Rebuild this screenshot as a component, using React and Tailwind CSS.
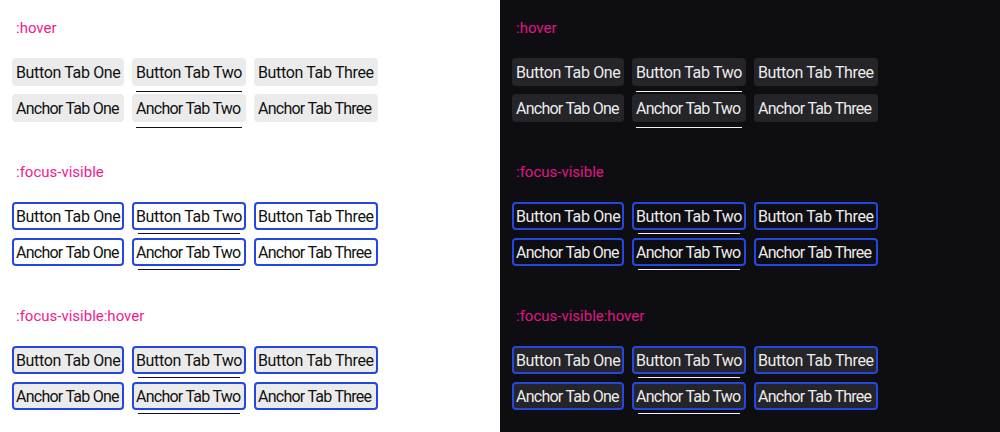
const sections = [
  { label: ":hover", state: "hover" },
  { label: ":focus-visible", state: "focus" },
  { label: ":focus-visible:hover", state: "both" },
];

const rows = [
  ["Button Tab One", "Button Tab Two", "Button Tab Three"],
  ["Anchor Tab One", "Anchor Tab Two", "Anchor Tab Three"],
];

const widths = ["w-[112px]", "w-[114px]", "w-[124px]"];

const Tab = ({ text, state, dark, col, anchor }) => {
  const hover = state === "hover" || state === "both";
  const focus = state === "focus" || state === "both";
  let cls = "relative h-7 rounded whitespace-nowrap overflow-visible " + widths[col] + " ";
  cls += anchor ? "tracking-[-0.75px] " : "tracking-[-0.35px] ";
  if (focus) cls += "border-2 border-[#2447e0] px-[2px] leading-[26px] ";
  else cls += "px-1 leading-[30px] ";
  if (hover) cls += dark ? "bg-[#252428] " : "bg-[#ebebeb] ";
  cls += dark ? "text-[#ececec]" : "text-[#111111]";
  return (
    <div className={cls}>
      <span className="block h-full">{text}</span>
      {col === 1 && (
        <span
          className={
            "absolute left-1 right-1 -bottom-[6px] h-px " +
            (dark ? "bg-[#f2f2f2]" : "bg-[#111111]")
          }
        ></span>
      )}
    </div>
  );
};

const Panel = ({ dark }) => (
  <div
    className={
      "w-[500px] h-[432px] pt-4 px-3 flex flex-col gap-[38px] " +
      (dark ? "bg-[#0e0d12]" : "bg-white")
    }
  >
    {sections.map((s) => (
      <div key={s.label} className="flex flex-col">
        <div
          className={
            "h-6 leading-6 px-1 mb-[18px] text-[15px] " +
            (dark ? "text-[#e0168a]" : "text-[#ec1c8e]")
          }
        >
          {s.label}
        </div>
        <div className="flex flex-col gap-2">
          {rows.map((r, ri) => (
            <div key={ri} className="flex gap-2">
              {r.map((t, i) => (
                <Tab key={t} text={t} state={s.state} dark={dark} col={i} anchor={ri === 1} />
              ))}
            </div>
          ))}
        </div>
      </div>
    ))}
  </div>
);

export default function App() {
  return (
    <div className="flex w-[1000px] h-[432px] overflow-hidden font-['Roboto',sans-serif] text-[16px]">
      <Panel dark={false} />
      <Panel dark={true} />
    </div>
  );
}
